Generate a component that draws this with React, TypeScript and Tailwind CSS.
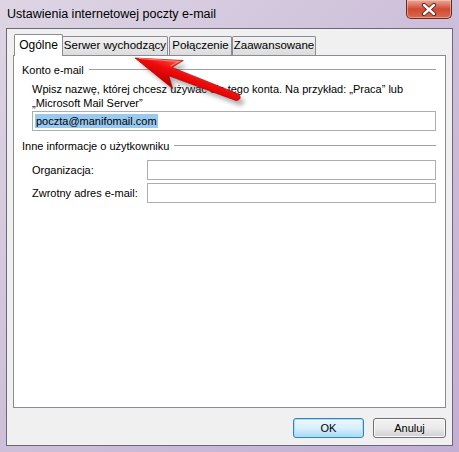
const sans = { fontFamily: '"Liberation Sans", Arial, sans-serif' };

const CloseButton = () => (
  <div className="mr-[1px] w-[46px] h-[19px] rounded-b-[5px] border border-t-0 border-[#6b2a20] bg-gradient-to-b from-[#e9a99b] via-[#cf4a33] to-[#d9694f] flex items-center justify-center shadow-[inset_0_0_0_1px_rgba(255,220,210,0.45)]">
    <svg width="16" height="13" viewBox="0 0 16 13">
      <path d="M3 2 L13 11 M13 2 L3 11" stroke="#5a1a10" strokeWidth="4.2" strokeLinecap="round" />
      <path d="M3 2 L13 11 M13 2 L3 11" stroke="#ffffff" strokeWidth="2.4" strokeLinecap="round" />
    </svg>
  </div>
);

const Tab = ({ label, active, w }: { label: string; active?: boolean; w: string }) => (
  <div
    className={
      active
        ? `${w} h-[22px] -mr-px bg-white border border-b-0 border-[#898c95] rounded-t-[2px] flex items-center justify-center whitespace-nowrap text-[12px] relative z-10 pb-[2px]`
        : `${w} h-[19px] mb-px bg-gradient-to-b from-[#f3f3f3] to-[#dcdcdc] border border-b-0 border-[#898c95] rounded-t-[2px] flex items-center justify-center whitespace-nowrap text-[11.5px]`
    }
  >
    {label}
  </div>
);

const GroupHeader = ({ title, mt }: { title: string; mt: string }) => (
  <div className={`${mt} h-[14px] flex items-center gap-[5px] text-[11px] leading-[14px]`}>
    <span className="whitespace-nowrap">{title}</span>
    <div className="flex-1 h-[2px] border-t border-[#a0a0a0] border-b border-b-white" />
  </div>
);

const Arrow = () => (
  <svg className="absolute left-0 top-0 pointer-events-none" width="459" height="452" viewBox="0 0 459 452">
    <defs>
      <linearGradient id="arrowFill" x1="0" y1="0" x2="0" y2="1">
        <stop offset="0" stopColor="#ff5a4e" />
        <stop offset="0.45" stopColor="#f00a0a" />
        <stop offset="1" stopColor="#b80000" />
      </linearGradient>
      <filter id="arrowShadow" x="-20%" y="-40%" width="140%" height="180%">
        <feGaussianBlur stdDeviation="2.2" />
      </filter>
    </defs>
    <g transform="translate(139 63) rotate(21)" opacity="0.45" filter="url(#arrowShadow)">
      <path d="M0 0 L46 -15 L38 -4.5 L110 -3.5 Q115 0 110 3.5 L38 4.5 L46 15 Z" fill="#555" />
    </g>
    <g transform="translate(135 58) rotate(21)">
      <path d="M0 0 L46 -15 L38 -4.5 L110 -3.5 Q115 0 110 3.5 L38 4.5 L46 15 Z" fill="url(#arrowFill)" stroke="#a80000" strokeWidth="0.6" />
      <path d="M4 -1 L42 -12.5 L36 -5" fill="none" stroke="#ff9a8a" strokeWidth="1" opacity="0.8" />
    </g>
  </svg>
);

export default function App() {
  return (
    <div
      className="relative w-[459px] h-[452px] overflow-hidden bg-gradient-to-br from-[#ddd5e4] via-[#cdbfd9] to-[#c3afd4] flex flex-col px-[6px] pb-[6px] text-black"
      style={sans}
    >
      {/* title bar */}
      <div className="h-[28px] flex items-start justify-between">
        <span className="pt-[6px] pl-[1px] text-[12.5px] leading-[16px] text-black">Ustawienia internetowej poczty e-mail</span>
        <CloseButton />
      </div>

      {/* client area */}
      <div className="flex-1 border border-[#6c6878] bg-[#f0f0f0] flex flex-col px-[6px] pt-[6px] pb-[7px]">
        <div className="h-[21px] flex items-end pl-px -mb-px">
          <Tab label="Ogólne" active w="w-[49px]" />
          <Tab label="Serwer wychodzący" w="w-[106px]" />
          <div className="w-[1px]" />
          <Tab label="Połączenie" w="w-[63px]" />
          <Tab label="Zaawansowane" w="w-[84px]" />
        </div>

        <div className="flex-1 bg-white border border-[#898c95] pt-[7px] pl-[8px] pr-[9px] flex flex-col">
          <GroupHeader title="Konto e-mail" mt="mt-0" />
          <div className="mt-[5px] pl-[10px] text-[11px] leading-[14px]">
            <div>Wpisz nazwę, której chcesz używać dla tego konta. Na przykład: „Praca” lub</div>
            <div>„Microsoft Mail Server”</div>
          </div>
          <div className="mt-[1px] ml-[10px] h-[20px] border border-[#abadb3] bg-white flex items-center px-[2px]">
            <span className="bg-[#99c9ef] text-[11px] leading-[14px] px-px">poczta@manifomail.com</span>
          </div>

          <GroupHeader title="Inne informacje o użytkowniku" mt="mt-[8px]" />
          <div className="mt-[7px] flex items-center h-[20px]">
            <span className="w-[125px] shrink-0 whitespace-nowrap pl-[10px] text-[11px]">Organizacja:</span>
            <div className="flex-1 h-[20px] border border-[#abadb3] bg-white" />
          </div>
          <div className="mt-[3px] flex items-center h-[20px]">
            <span className="w-[125px] shrink-0 whitespace-nowrap pl-[10px] text-[11px]">Zwrotny adres e-mail:</span>
            <div className="flex-1 h-[20px] border border-[#abadb3] bg-white" />
          </div>
        </div>

        <div className="mt-[10px] flex justify-end gap-[9px]">
          <button className="w-[71px] h-[20px] rounded-[3px] border border-[#3c7fb1] bg-gradient-to-b from-[#eaf6fd] via-[#d9f0fc] to-[#a7d9f5] text-[11px] shadow-[inset_0_0_0_1px_#a5e0fb]">
            OK
          </button>
          <button className="w-[73px] h-[20px] rounded-[3px] border border-[#707070] bg-gradient-to-b from-[#f2f2f2] via-[#ebebeb] to-[#cfcfcf] text-[11px] shadow-[inset_0_0_0_1px_#fbfbfb]">
            Anuluj
          </button>
        </div>
      </div>

      <Arrow />
    </div>
  );
}
